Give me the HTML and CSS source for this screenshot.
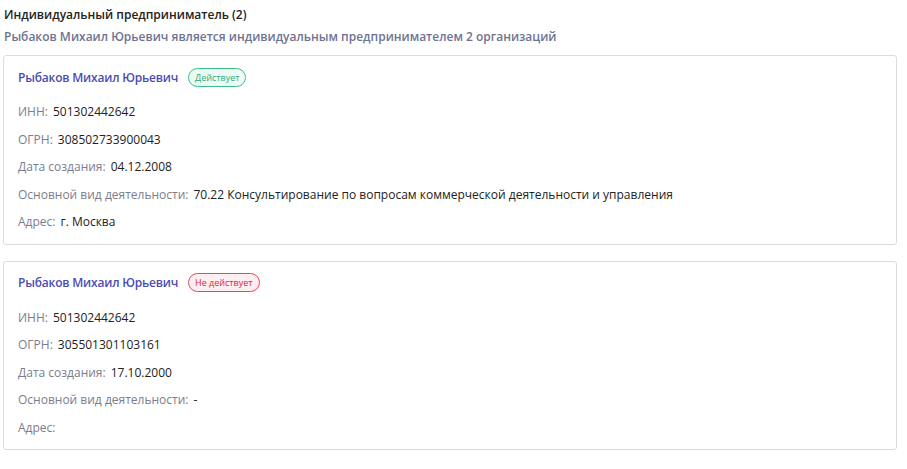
FILE: index.html
```html
<!DOCTYPE html>
<html lang="ru">
<head>
  <meta charset="UTF-8">
  <title>Индивидуальный предприниматель</title>
  <link rel="stylesheet" href="styles.css">
</head>
<body>
  <div class="section">
    <h2 class="section-title">Индивидуальный предприниматель (2)</h2>
    <p class="section-sub">Рыбаков Михаил Юрьевич является индивидуальным предпринимателем 2 организаций</p>

    <div class="card">
      <div class="card-head">
        <a class="card-name" href="#">Рыбаков Михаил Юрьевич</a>
        <span class="badge badge-active">Действует</span>
      </div>
      <div class="row"><span class="label">ИНН:</span><span class="value">501302442642</span></div>
      <div class="row"><span class="label">ОГРН:</span><span class="value">308502733900043</span></div>
      <div class="row"><span class="label">Дата создания:</span><span class="value">04.12.2008</span></div>
      <div class="row"><span class="label">Основной вид деятельности:</span><span class="value">70.22 Консультирование по вопросам коммерческой деятельности и управления</span></div>
      <div class="row"><span class="label">Адрес:</span><span class="value">г. Москва</span></div>
    </div>

    <div class="card">
      <div class="card-head">
        <a class="card-name" href="#">Рыбаков Михаил Юрьевич</a>
        <span class="badge badge-closed">Не действует</span>
      </div>
      <div class="row"><span class="label">ИНН:</span><span class="value">501302442642</span></div>
      <div class="row"><span class="label">ОГРН:</span><span class="value">305501301103161</span></div>
      <div class="row"><span class="label">Дата создания:</span><span class="value">17.10.2000</span></div>
      <div class="row"><span class="label">Основной вид деятельности:</span><span class="value">-</span></div>
      <div class="row"><span class="label">Адрес:</span><span class="value"></span></div>
    </div>
  </div>
</body>
</html>
```

FILE: styles.css
```css
body {
  margin: 0;
  background: #fff;
  font-family: "Open Sans", "Liberation Sans", sans-serif;
  font-size: 12px;
  color: #222;
}

.section {
  padding: 6px 10px 0 3px;
}

.section-title {
  margin: 0 0 4px 1px;
  font-size: 12px;
  font-weight: 600;
  line-height: 18px;
  color: #222;
}

.section-sub {
  margin: 0 0 9px 1px;
  font-size: 12px;
  font-weight: 600;
  line-height: 18px;
  color: #6e7391;
}

.card {
  border: 1px solid #dcdcdc;
  border-radius: 3px;
  padding: 11px 14px 3px;
  margin-bottom: 16px;
}

.card-head {
  display: flex;
  align-items: center;
  gap: 10px;
  height: 20px;
  margin-bottom: 16px;
}

.card-name {
  font-weight: 600;
  letter-spacing: -0.2px;
  color: #4b4db1;
  text-decoration: none;
}

.badge {
  display: inline-block;
  height: 17px;
  line-height: 17px;
  padding: 0 6px;
  border-radius: 10px;
  font-size: 9px;
  border: 1px solid;
}

.badge-active {
  color: #2faa7a;
  border-color: #3cbf8c;
  background: #eefaf4;
}

.badge-closed {
  color: #d6283c;
  border-color: #e4485a;
  background: #fdeff1;
}

.row {
  display: flex;
  gap: 5px;
  line-height: 18px;
  margin-bottom: 9.5px;
}

.label {
  color: #7b7d8c;
}

.value {
  color: #222;
}
```
